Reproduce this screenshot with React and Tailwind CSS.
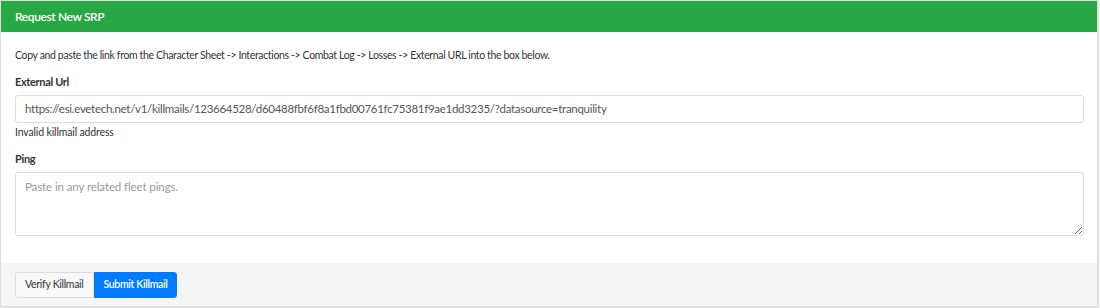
export default function App() {
  return (
    <div className="w-[1100px] h-[308px] bg-white" style={{ fontFamily: "Lato, 'Noto Sans', sans-serif" }}>
      <div className="w-[1098px] h-[307px] border border-[#dcdcdc] shadow-[1px_1px_2px_rgba(0,0,0,0.15)] flex flex-col overflow-hidden">
        <div className="h-[31px] bg-[#28a745] text-white text-[12px] tracking-[-0.4px] font-semibold flex items-center px-[14px] shrink-0">
          Request New SRP
        </div>
        <div className="flex-1 px-[14px] pt-[15px] text-[#333] text-[10.5px] tracking-[-0.36px]">
          <p className="leading-[16px]">Copy and paste the link from the Character Sheet -&gt; Interactions -&gt; Combat Log -&gt; Losses -&gt; External URL into the box below.</p>
          <div className="mt-[11px] font-bold text-[11px] tracking-[-0.35px] leading-[16px]">External Url</div>
          <div className="mt-[5px] w-[1069px] h-[28px] border border-[#ddd] rounded-[3px] flex items-center px-[9px] text-[11.5px] tracking-[-0.29px] text-[#555]">
            https://esi.evetech.net/v1/killmails/123664528/d60488fbf6f8a1fbd00761fc75381f9ae1dd3235/?datasource=tranquility
          </div>
          <div className="mt-[1px] leading-[16px] tracking-[-0.15px]">Invalid killmail address</div>
          <div className="mt-[11px] font-bold text-[11px] tracking-[-0.35px] leading-[16px]">Ping</div>
          <textarea
            className="mt-[5px] block w-[1069px] h-[64px] border border-[#ddd] rounded-[3px] px-[9px] py-[5px] text-[11.5px] tracking-[-0.1px] text-[#555] placeholder:text-[#999] outline-none resize-y"
            placeholder="Paste in any related fleet pings."
          />
        </div>
        <div className="h-[43px] bg-[#f5f5f5] px-[14px] flex items-center shrink-0">
          <div className="flex h-[26px]">
            <button className="h-full px-[9px] border border-[#ddd] bg-[#f8f9fa] text-[#333] text-[10.5px] tracking-[-0.3px] rounded-l-[3px]">Verify Killmail</button>
            <button className="h-full px-[9px] border border-[#007bff] bg-[#007bff] text-white text-[10.5px] tracking-[-0.35px] font-semibold rounded-r-[3px]">Submit Killmail</button>
          </div>
        </div>
      </div>
    </div>
  );
}
